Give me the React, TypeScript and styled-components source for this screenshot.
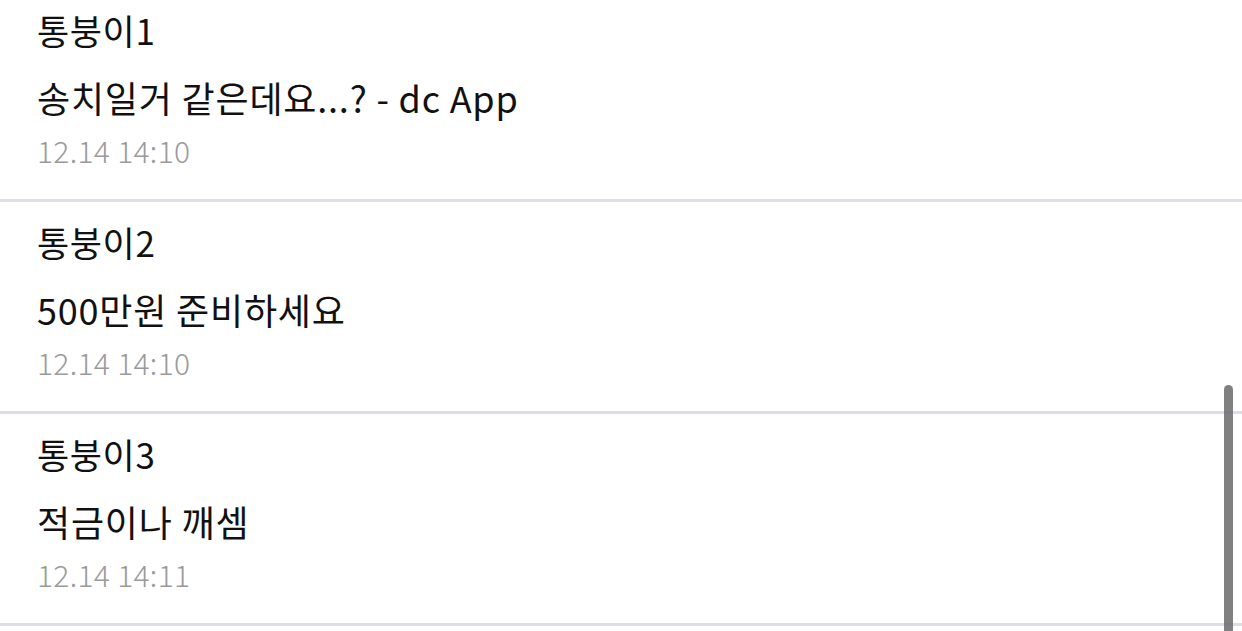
import React from 'react';
import styled, { createGlobalStyle } from 'styled-components';

type Comment = {
  id: number;
  author: string;
  body: string;
  date: string;
};

const comments: Comment[] = [
  { id: 1, author: '통붕이1', body: '송치일거 같은데요...? - dc App', date: '12.14 14:10' },
  { id: 2, author: '통붕이2', body: '500만원 준비하세요', date: '12.14 14:10' },
  { id: 3, author: '통붕이3', body: '적금이나 깨셈', date: '12.14 14:11' },
];

const GlobalStyle = createGlobalStyle`
  * {
    box-sizing: border-box;
  }

  html,
  body {
    margin: 0;
    padding: 0;
    background: #fff;
  }

  body {
    font-family: 'Noto Sans CJK KR', 'Noto Sans', sans-serif;
    color: #111;
  }
`;

const Screen = styled.div`
  position: relative;
  height: 631px;
  overflow: hidden;
  background: #fff;
`;

const CommentList = styled.ul`
  margin: -10px 0 0;
  padding: 0;
  list-style: none;
`;

const CommentRow = styled.li`
  display: flex;
  flex-direction: column;
  height: 212px;
  padding: 10px 0 0 37px;
  border-bottom: 3px solid #dfdde9;
`;

const Author = styled.span`
  font-size: 35px;
  line-height: 60px;
  letter-spacing: 0.6px;
`;

const Body = styled.p`
  margin: 7px 0 0;
  font-size: 36px;
  line-height: 60px;
  letter-spacing: 0.8px;
`;

const DateText = styled.span`
  font-size: 30px;
  font-weight: 300;
  line-height: 46px;
  color: #9a9a9a;
  letter-spacing: 0.3px;
`;

const ScrollThumb = styled.div`
  position: absolute;
  top: 385px;
  right: 9px;
  width: 9px;
  height: 260px;
  border-radius: 5px;
  background: rgba(110, 110, 110, 0.88);
`;

const App = () => {
  return (
    <Screen>
      <GlobalStyle />
      <CommentList>
        {comments.map((comment) => (
          <CommentRow key={comment.id}>
            <Author>{comment.author}</Author>
            <Body>{comment.body}</Body>
            <DateText>{comment.date}</DateText>
          </CommentRow>
        ))}
      </CommentList>
      <ScrollThumb />
    </Screen>
  );
};

export default App;
